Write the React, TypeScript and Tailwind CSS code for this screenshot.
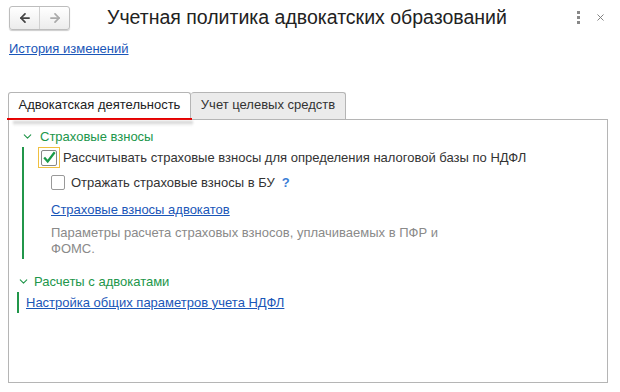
import { ArrowLeft, ArrowRight, ChevronDown, X } from "lucide-react"

const font = { fontFamily: '"Liberation Sans", Arial, sans-serif' }

export default function App() {
  return (
    <div className="relative h-[392px] w-[620px] overflow-hidden bg-white text-[13px] text-[#333]" style={font}>
      {/* Header */}
      <div className="flex h-[34px] items-center pl-[9px] pr-[12px] pt-[1px]">
        <div className="flex h-[24px] w-[61px] overflow-hidden rounded-[3px] border border-[#bdbdbd] bg-gradient-to-b from-white to-[#ececec] shadow-[0_1px_1px_rgba(0,0,0,0.2)]">
          <div className="flex w-[30px] items-center justify-center border-r border-[#d0d0d0]">
            <ArrowLeft className="h-[14px] w-[14px] text-[#444]" strokeWidth={3} />
          </div>
          <div className="flex flex-1 items-center justify-center">
            <ArrowRight className="h-[14px] w-[14px] text-[#aaa]" strokeWidth={3} />
          </div>
        </div>
        <div className="ml-[37px] flex-1 text-[19.5px] leading-none text-[#222]">Учетная политика адвокатских образований</div>
        <div className="mr-[15px] flex flex-col gap-[2px]">
          <span className="h-[3px] w-[3px] bg-[#888]" />
          <span className="h-[3px] w-[3px] bg-[#888]" />
          <span className="h-[3px] w-[3px] bg-[#888]" />
        </div>
        <X className="mr-[2px] h-[11px] w-[11px] text-[#777]" strokeWidth={2} />
      </div>

      <div className="pl-[9px] pt-[5px]">
        <a className="text-[13px] text-[#1a56b8] underline">История изменений</a>
      </div>

      {/* Tabs */}
      <div className="mt-[33px] px-[8px]">
        <div className="flex h-[27px] items-end">
          <div className="relative flex h-[27px] w-[183px] items-center justify-center rounded-t-[3px] border border-b-0 border-[#b5b5b5] bg-white pb-[1px] text-[13px] text-[#222]">
            Адвокатская деятельность
            <div className="absolute -bottom-[1px] -left-[2px] h-[2px] w-[185px] bg-[#e60000]" />
            <div className="absolute -bottom-[7px] left-[4px] h-[5px] w-[180px] bg-gradient-to-b from-[#c8c8c8] to-transparent blur-[1px]" />
          </div>
          <div className="flex h-[27px] w-[155px] items-center justify-center rounded-t-[3px] border border-b-0 border-l-0 border-[#b5b5b5] bg-[#ebebeb] pb-[1px] text-[13px] text-[#333]">
            Учет целевых средств
          </div>
        </div>
        <div className="h-[264px] w-[600px] border border-[#b5b5b5] pl-[12px] pt-[7px]">
          {/* Section 1 */}
          <div className="flex items-center gap-[6px] text-[13px] text-[#21964a]">
            <ChevronDown className="h-[13px] w-[13px]" strokeWidth={2} />
            <span>Страховые взносы</span>
          </div>
          <div className="ml-[1px] mt-[1px] border-l-[2px] border-[#21964a] pb-[2px] pl-[14px]">
            <div className="flex items-center">
              <div className="flex h-[21px] w-[22px] items-center justify-center border border-[#f0c040]">
                <div className="flex h-[16px] w-[16px] items-center justify-center rounded-[2px] border border-[#888] bg-white">
                  <svg viewBox="0 0 16 16" className="h-[16px] w-[16px]">
                    <path d="M2.5 7.5 L6.5 12 L14.5 1.5" fill="none" stroke="#1a9a48" strokeWidth="2.6" />
                  </svg>
                </div>
              </div>
              <span className="ml-[3px]">Рассчитывать страховые взносы для определения налоговой базы по НДФЛ</span>
            </div>
            <div className="ml-[13px] mt-[5px] flex items-center">
              <div className="h-[15px] w-[14px] rounded-[2px] border border-[#999] bg-white" />
              <span className="ml-[6px]">Отражать страховые взносы в БУ</span>
              <span className="ml-[7px] font-bold text-[#3b7ed6]">?</span>
            </div>
            <div className="ml-[13px] mt-[7px]">
              <a className="text-[#1a56b8] underline">Страховые взносы адвокатов</a>
            </div>
            <div className="ml-[13px] mt-[6px] w-[420px] leading-[16px] text-[#8a8a8a]">
              Параметры расчета страховых взносов, уплачиваемых в ПФР и ФОМС.
            </div>
          </div>

          {/* Section 2 */}
          <div className="-ml-[4px] mt-[13px] flex items-center gap-[4px] text-[13px] text-[#21964a]">
            <ChevronDown className="h-[13px] w-[13px]" strokeWidth={2} />
            <span>Расчеты с адвокатами</span>
          </div>
          <div className="-ml-[4px] mt-0 border-l-[2px] border-[#21964a] py-[1px] pl-[7px]">
            <a className="text-[#1a56b8] underline">Настройка общих параметров учета НДФЛ</a>
          </div>
        </div>
      </div>
    </div>
  )
}
